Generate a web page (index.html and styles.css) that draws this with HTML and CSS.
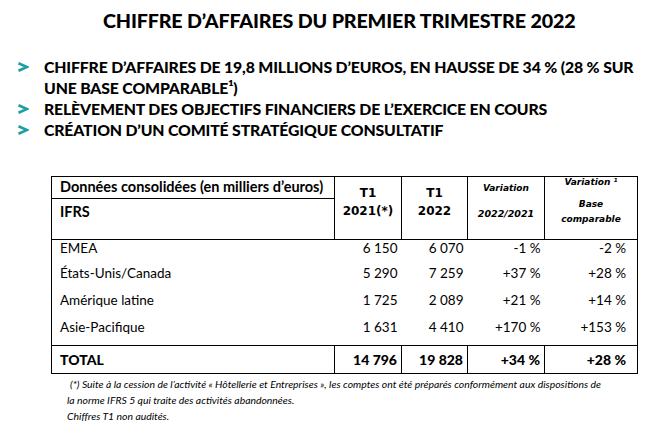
FILE: index.html
```html
<!DOCTYPE html>
<html lang="fr">
<head>
<meta charset="utf-8">
<link rel="stylesheet" href="styles.css">
</head>
<body>
<div class="page">
  <h1 class="title">CHIFFRE D’AFFAIRES DU PREMIER TRIMESTRE 2022</h1>
  <ul class="bullets">
    <li><span class="chev"><svg width="12" height="10" viewBox="0 0 12 10"><path d="M1.5 1.2 L10 5 L1.5 8.8" fill="none" stroke="#1e9fa2" stroke-width="2.6" stroke-linejoin="miter"/></svg></span><span class="btxt">CHIFFRE D’AFFAIRES DE 19,8 MILLIONS D’EUROS, EN HAUSSE DE 34 % (28 % SUR UNE BASE COMPARABLE¹)</span></li>
    <li><span class="chev"><svg width="12" height="10" viewBox="0 0 12 10"><path d="M1.5 1.2 L10 5 L1.5 8.8" fill="none" stroke="#1e9fa2" stroke-width="2.6" stroke-linejoin="miter"/></svg></span><span class="btxt">RELÈVEMENT DES OBJECTIFS FINANCIERS DE L’EXERCICE EN COURS</span></li>
    <li><span class="chev"><svg width="12" height="10" viewBox="0 0 12 10"><path d="M1.5 1.2 L10 5 L1.5 8.8" fill="none" stroke="#1e9fa2" stroke-width="2.6" stroke-linejoin="miter"/></svg></span><span class="btxt">CRÉATION D’UN COMITÉ STRATÉGIQUE CONSULTATIF</span></li>
  </ul>
  <table class="fig">
    <colgroup>
      <col class="c1"><col class="c2"><col class="c3"><col class="c4"><col class="c5">
    </colgroup>
    <thead>
      <tr class="h1">
        <th class="lab">Données consolidées (en milliers d’euros)</th>
        <th rowspan="2" class="yr">T1<br>2021(*)</th>
        <th rowspan="2" class="yr">T1<br>2022</th>
        <th rowspan="2" class="var"><span class="v1">Variation</span><span class="v2">2022/2021</span></th>
        <th rowspan="2" class="var5"><span class="w1">Variation ¹</span><span class="w2">Base<br>comparable</span></th>
      </tr>
      <tr class="h2">
        <th class="lab">IFRS</th>
      </tr>
    </thead>
    <tbody>
      <tr class="r"><td>EMEA</td><td>6 150</td><td>6 070</td><td>-1 %</td><td>-2 %</td></tr>
      <tr class="r"><td>États-Unis/Canada</td><td>5 290</td><td>7 259</td><td>+37 %</td><td>+28 %</td></tr>
      <tr class="r"><td>Amérique latine</td><td>1 725</td><td>2 089</td><td>+21 %</td><td>+14 %</td></tr>
      <tr class="r"><td>Asie-Pacifique</td><td>1 631</td><td>4 410</td><td>+170 %</td><td>+153 %</td></tr>
      <tr class="tot"><td>TOTAL</td><td>14 796</td><td>19 828</td><td>+34 %</td><td>+28 %</td></tr>
    </tbody>
  </table>
  <div class="notes">
    <p class="n1">(*) Suite à la cession de l’activité « Hôtellerie et Entreprises », les comptes ont été préparés conformément aux dispositions de</p>
    <p>la norme IFRS 5 qui traite des activités abandonnées.</p>
    <p>Chiffres T1 non audités.</p>
  </div>
</div>
</body>
</html>
```
FILE: styles.css
```css
html, body { margin: 0; padding: 0; background: #fff; }
body { width: 653px; height: 436px; overflow: hidden; color: #000; font-family: "Lato", "Liberation Sans", sans-serif; }
.page { padding: 10px 0 0 0; }
.title {
  margin: 0 0 0 103px;
  width: 480px;
  font-size: 19.7px;
  line-height: 22px;
  font-weight: 900;
  white-space: nowrap;
  letter-spacing: -0.15px;
}
.bullets { list-style: none; margin: 24px 0 0 0; padding: 0; }
.bullets li {
  display: flex;
  font-size: 15.8px;
  font-weight: 900;
  line-height: 21px;
  letter-spacing: -0.15px;
}
.chev { width: 44px; flex: none; padding-left: 17px; box-sizing: border-box; padding-top: 6px; line-height: 0; }
.btxt { width: 600px; }
.fig {
  margin: 36px 0 0 51px;
  border-collapse: collapse;
  table-layout: fixed;
  width: 586px;
  border: 1.5px solid #000;
}
.c1 { width: 283px; } .c2 { width: 67px; } .c3 { width: 66px; } .c4 { width: 77px; } .c5 { width: 93px; }
.fig th { border: 1.5px solid #000; padding: 0; }
.fig th.lab { text-align: left; padding-left: 8px; font-size: 14.5px; font-weight: 700; box-sizing: border-box; }
.fig .h1 th.lab { height: 22px; line-height: 16px; vertical-align: middle; padding-bottom: 1px; }
.fig .h2 th.lab { height: 41px; vertical-align: top; padding-top: 5px; line-height: 16px; }
.fig th.yr { font-family: "DejaVu Sans", sans-serif; font-size: 12px; line-height: 18px; font-weight: bold; vertical-align: middle; padding-bottom: 13px; }
.fig th.var, .fig th.var5 { font-family: "DejaVu Sans", sans-serif; font-style: italic; font-size: 9px; font-weight: bold; vertical-align: top; }
.v1 { display: block; margin-top: 4px; line-height: 14px; }
.v2 { display: block; margin-top: 12px; font-size: 9.5px; line-height: 14px; }
.w1 { display: block; margin-top: -1px; line-height: 12px; }
.w2 { display: block; margin-top: 9px; line-height: 15px; }
.fig td { padding: 0 4px 0 8px; text-align: right; font-size: 13.5px; font-weight: 400; }
.fig td:first-child { text-align: left; }
.fig td:last-child { padding-right: 11px; }
.fig .r td { height: 27px; vertical-align: top; padding-top: 0; box-sizing: border-box; line-height: 16px; }
.fig .r:first-child td { height: 25px; }
.fig .r:nth-child(4) td { height: 27px; }
.fig .tot td { border: 1.5px solid #000; height: 28px; font-weight: 900; font-size: 14px; vertical-align: middle; box-sizing: border-box; line-height: 16px; }
.notes { margin: 2px 0 0 67px; font-family: "Lato", sans-serif; font-style: italic; font-size: 10.4px; }
.notes p { margin: 0; white-space: nowrap; height: 16px; line-height: 16px; }
.notes .n1 { padding-left: 3px; }
```
